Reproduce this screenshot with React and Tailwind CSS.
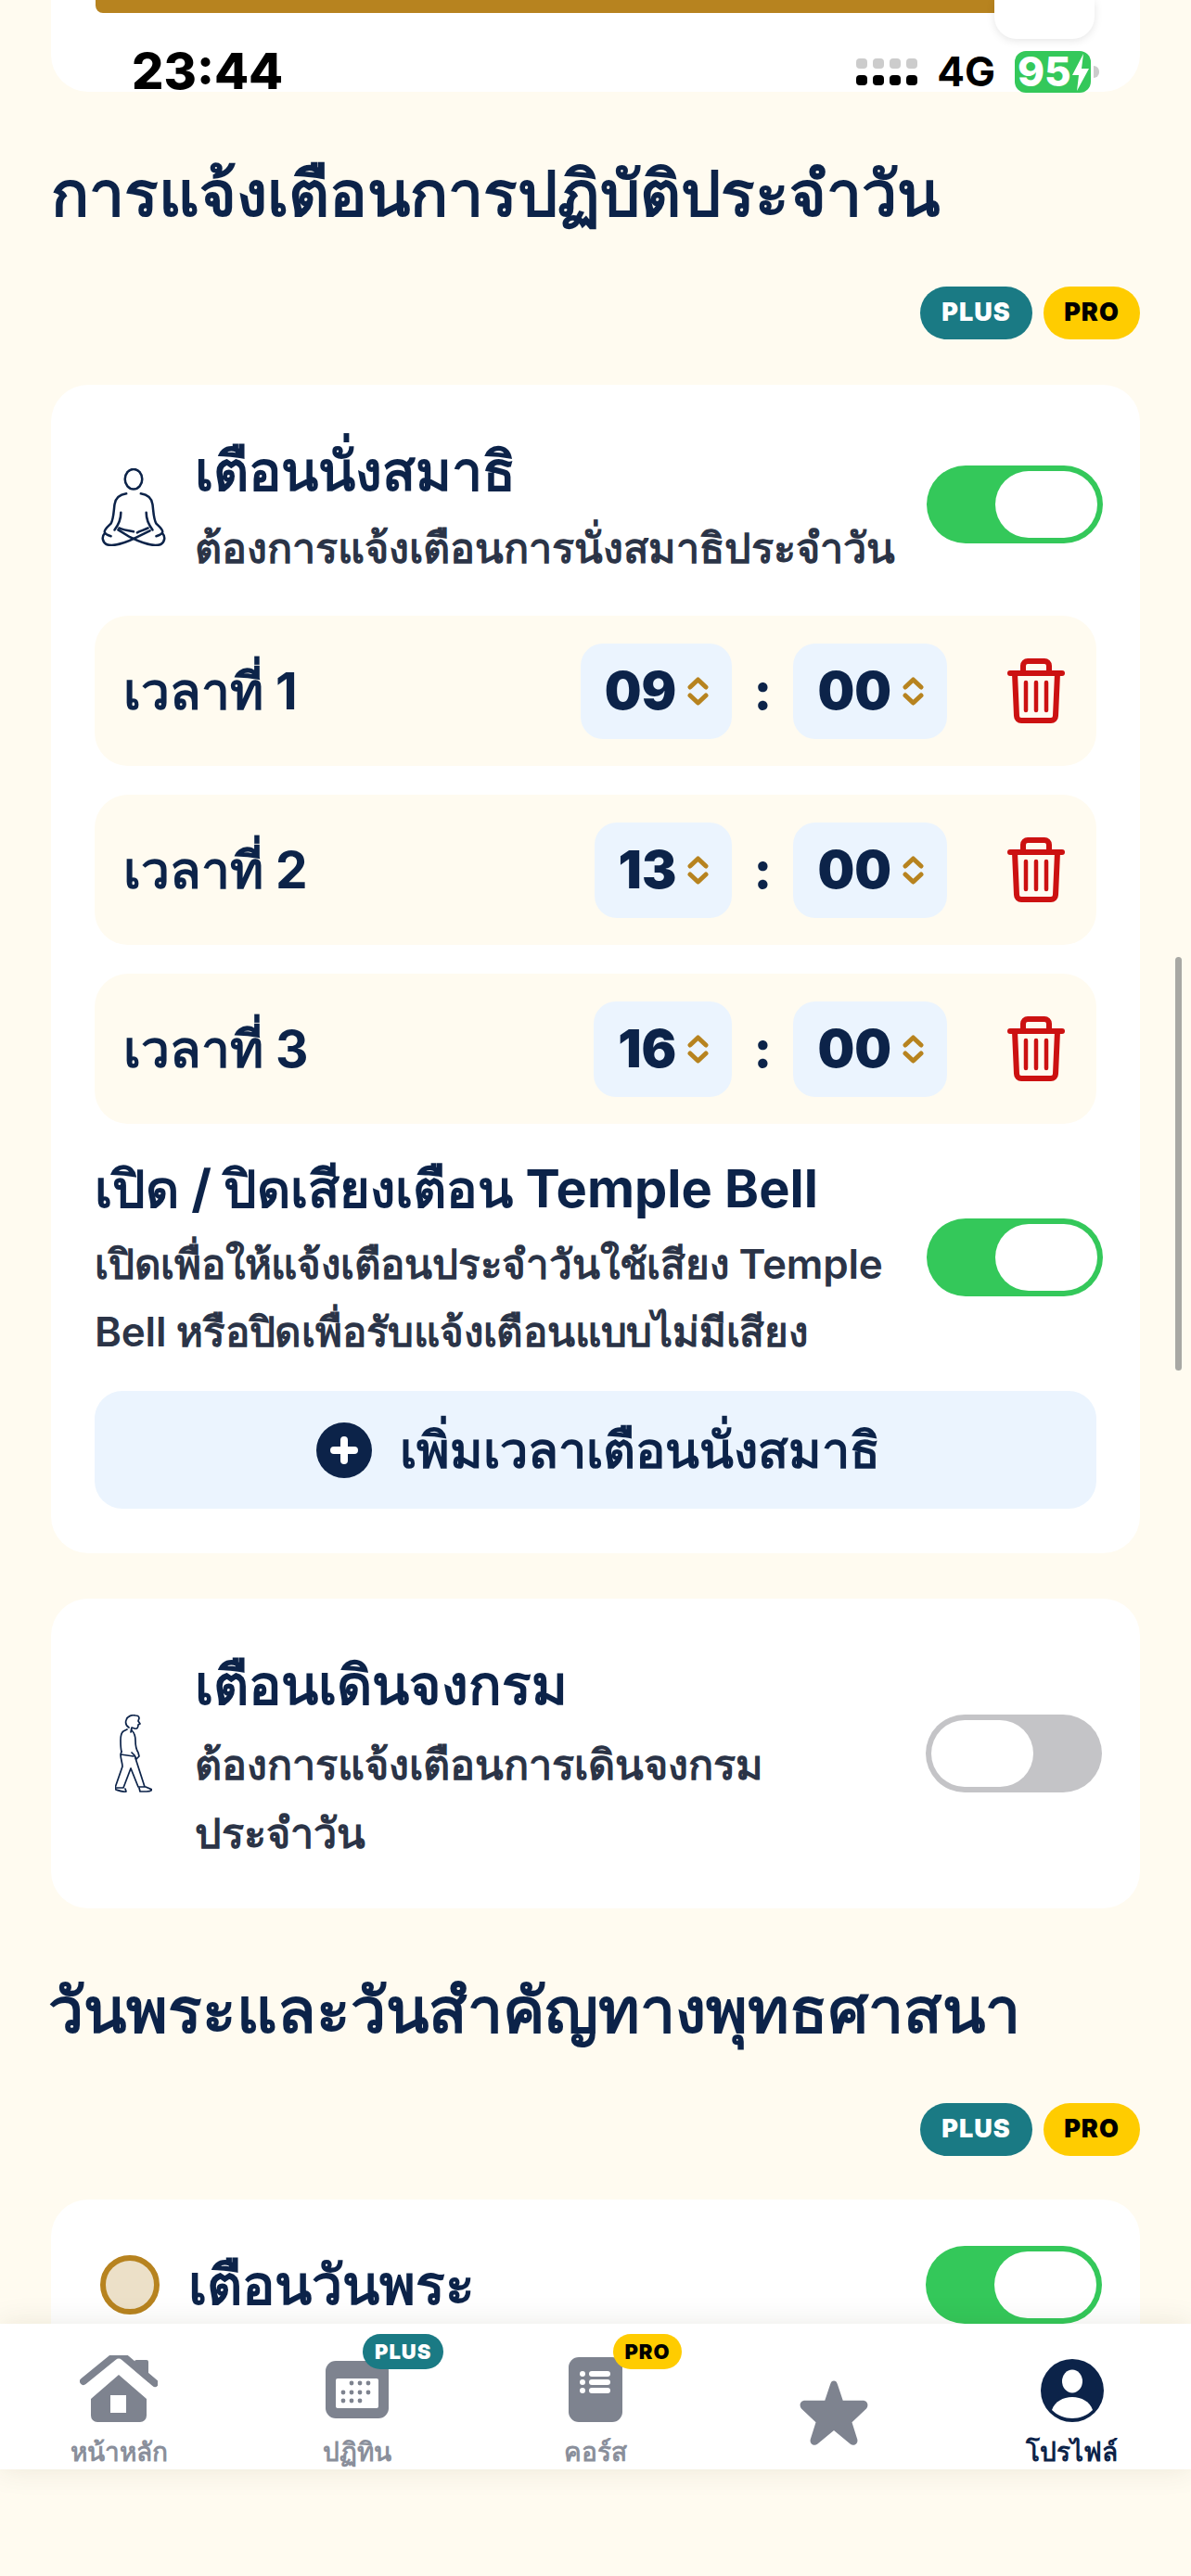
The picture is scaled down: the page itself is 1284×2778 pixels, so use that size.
const Toggle = ({ on = true, className = '' }) => (
  <div className={`flex h-[84px] w-[190px] shrink-0 items-center rounded-[42px] p-[6px] ${on ? 'justify-end bg-[#34c85a]' : 'justify-start bg-[#c4c4c7]'} ${className}`}>
    <div className="h-[72px] w-[110px] rounded-[36px] bg-white" />
  </div>
);

const Badge = ({ pro, small }) => (
  <span className={`flex items-center justify-center rounded-full font-black tracking-[1px] ${small ? 'h-[38px] text-[22px]' : 'h-[57px] text-[27px]'} ${pro ? `bg-[#ffcc00] text-black ${small ? 'w-[74px]' : 'w-[104px]'}` : `bg-[#1a7a84] text-white ${small ? 'w-[87px]' : 'w-[121px]'}`}`}>
    {pro ? 'PRO' : 'PLUS'}
  </span>
);

const PlanBadges = () => (
  <div className="flex justify-end gap-3">
    <Badge />
    <Badge pro />
  </div>
);

const Stepper = () => (
  <svg width="23" height="31" viewBox="0 0 23 31" fill="none" stroke="#b7831f" strokeWidth="5" strokeLinecap="round" strokeLinejoin="round">
    <path d="M3 11l8.5-8 8.5 8" />
    <path d="M3 20l8.5 8 8.5-8" />
  </svg>
);

const TimeBox = ({ value }) => (
  <div className="flex h-[103px] items-center gap-[12px] rounded-[24px] bg-[#ebf4fe] pl-[26px] pr-[25px]">
    <span className="text-[56px] font-black leading-none text-[#0c2349]">{value}</span>
    <Stepper />
  </div>
);

const Trash = () => (
  <svg width="62" height="70" viewBox="0 0 62 70" fill="none" stroke="#cc1111" strokeWidth="6" strokeLinecap="round" strokeLinejoin="round">
    <path d="M3 16h56" />
    <path d="M17 15V8a5 5 0 0 1 5-5h18a5 5 0 0 1 5 5v7" />
    <path d="M8 16l2 46a5 5 0 0 0 5 5h32a5 5 0 0 0 5-5l2-46" />
    <path d="M20 26v30M31 26v30M42 26v30" strokeWidth="4.5" />
  </svg>
);

const TimeRow = ({ label, hour }) => (
  <div className="flex h-[162px] items-center rounded-[36px] bg-[#fffbf0] pl-[31px] pr-[34px]">
    <span className="flex-1 text-[55px] font-bold text-[#0c2349]">{label}</span>
    <TimeBox value={hour} />
    <span className="w-[66px] text-center text-[56px] font-extrabold leading-none text-[#0c2349]">:</span>
    <TimeBox value="00" />
    <span className="ml-[65px]"><Trash /></span>
  </div>
);

const SitIcon = () => (
  <svg width="72" height="84" viewBox="0 0 72 86" fill="none" stroke="#0c2349" strokeWidth="2.6" strokeLinecap="round" strokeLinejoin="round">
    <ellipse cx="36" cy="12" rx="9.5" ry="11" />
    <path d="M28 28c-7 1-12 5-13 12-1 8-1 16-4 21-3 3-7 6-7 9 0 2 3 4 7 5" />
    <path d="M44 28c7 1 12 5 13 12 1 8 1 16 4 21 3 3 7 6 7 9 0 2-3 4-7 5" />
    <path d="M22 49c0 8-3 14-7 19M50 49c0 8 3 14 7 19" />
    <path d="M4 72c-3 3-3 9 2 12 8 3 20-1 34-8l14-7" />
    <path d="M68 72c3 3 3 9-2 12-8 3-20-1-34-8l-13-8" />
    <path d="M20 66c4 2 10 3 16 4M52 66c-4 2-8 3-12 5" />
  </svg>
);

const WalkIcon = () => (
  <svg width="40" height="84" viewBox="0 0 40 84" fill="none" stroke="#0c2349" strokeWidth="1.7" strokeLinecap="round" strokeLinejoin="round">
    <path d="M15 14c-3-2-4-5-3-8 1-4 6-6 10-5 2 0 4 1 4 3l-1 3 2 3-2 1c0 3-1 5-4 4l-3-1-1 5" />
    <path d="M13 16l-4 2c-3 2-3 6-3 10 0 4 0 8 1 12" />
    <path d="M18 17c3 3 4 7 4 11 0 6 1 10 3 13l1 4-3 3-2-4-3-3" />
    <path d="M7 40l-1 3 14 2M6 43c0 5 2 9 2 13L0 79" />
    <path d="M22 47l10 31h-7L17 58l-8 21H0" />
    <path d="M0 79l1 2c3 1 8 3 11 2l-1-3M26 79l1 4h7c2 0 5-1 6-2l-7-3" />
  </svg>
);

const navItems = [
  { label: 'หน้าหลัก', key: 'home' },
  { label: 'ปฏิทิน', key: 'calendar' },
  { label: 'คอร์ส', key: 'course' },
  { label: '', key: 'star' },
  { label: 'โปรไฟล์', key: 'profile' },
];

const NavIcon = ({ name }) => {
  if (name === 'home') return (
    <svg width="84" height="72" viewBox="0 0 84 72" fill="#7e838f">
      <path d="M59 7a2 2 0 0 1 2-2h11a2 2 0 0 1 2 2v22L59 16z" />
      <path d="M4 28L36 2a9 9 0 0 1 12 0l33 28" fill="none" stroke="#7e838f" strokeWidth="8" strokeLinecap="round" />
      <path fillRule="evenodd" d="M42 21l30 26v18a7 7 0 0 1-7 7H19a7 7 0 0 1-7-7V47zM33 43v19h17V43z" />
    </svg>
  );
  if (name === 'calendar') return (
    <svg width="68" height="62" viewBox="0 0 68 62" className="mb-[4px]">
      <rect width="68" height="62" rx="11" fill="#7e838f" />
      <rect x="11" y="19" width="46" height="32" rx="2" fill="#fff" />
      {[26, 35, 44, 53].flatMap((x, i) => [24, 34, 43].filter((y) => !(y === 24 && i === 0) && !(y === 43 && i === 3)).map((y) => (
        <circle key={`${x}-${y}`} cx={x - 7} cy={y} r="2.4" fill="#7e838f" />
      )))}
    </svg>
  );
  if (name === 'course') return (
    <svg width="58" height="70" viewBox="0 0 58 70">
      <rect width="58" height="70" rx="11" fill="#7e838f" />
      <g fill="#fff">
        <circle cx="15" cy="18" r="3" /><circle cx="15" cy="27" r="3" /><circle cx="15" cy="36" r="3" />
        <rect x="22" y="15" width="23" height="6" rx="3" /><rect x="22" y="24" width="23" height="6" rx="3" /><rect x="22" y="33" width="23" height="6" rx="3" />
      </g>
    </svg>
  );
  if (name === 'star') return (
    <svg width="74" height="71" viewBox="0 0 76 72" fill="#7e838f" className="-mb-[25px]">
      <path d="M38 1c2 0 3 1 4 4l6 18 22 0c5 0 7 5 4 9L58 47l6 19c1 5-4 8-8 5L38 56 20 71c-4 3-9 0-8-5l6-19L2 32c-3-4-1-9 4-9l22 0 6-18c1-3 2-4 4-4z" />
    </svg>
  );
  return (
    <svg width="68" height="68" viewBox="0 0 68 68">
      <circle cx="34" cy="34" r="34" fill="#0c2349" />
      <ellipse cx="34" cy="24" rx="11" ry="12.5" fill="#fff" />
      <path d="M12 55c3-9 12-14 22-14s19 5 22 14c-6 6-14 9-22 9s-16-3-22-9z" fill="#fff" />
    </svg>
  );
};

const NavItem = ({ item }) => (
  <div className="flex flex-col items-center">
    <div className="relative flex h-[88px] w-[90px] items-end justify-center">
      <NavIcon name={item.key} />
      {item.key === 'calendar' && <span className="absolute left-[51px] top-[-7px]"><Badge small /></span>}
      {item.key === 'course' && <span className="absolute left-[64px] top-[-7px]"><Badge small pro /></span>}
    </div>
    <span className={`mt-[14px] text-[28px] font-semibold leading-[36px] ${item.key === 'profile' ? 'text-[#0c2349]' : 'text-[#8a8f9b]'}`}>{item.label}</span>
  </div>
);

export default function App() {
  return (
    <div className="relative flex h-[2778px] w-[1284px] flex-col overflow-hidden bg-[#fffbf0] font-['Inter','Noto_Sans','sans-serif']">
      <div className="h-[2506px] overflow-hidden">
        <div className="relative mx-[55px] h-[99px] rounded-b-[40px] bg-white">
          <div className="ml-[48px] mr-[150px] h-[14px] rounded-bl-[8px] bg-[#b7831f]" />
          <div className="absolute right-[49px] top-0 h-[42px] w-[108px] rounded-b-[24px] bg-white shadow-[0_2px_10px_rgba(0,0,0,0.1)]" />
          <div className="absolute left-[87px] right-[53px] top-[52px] flex items-center justify-between">
            <span className="text-[54px] font-extrabold leading-[50px] text-black">23:44</span>
            <div className="flex items-center gap-[21px]">
              <div className="grid grid-cols-4 gap-x-[6px] gap-y-[7px]">
                {[0, 1, 2, 3].map((i) => <span key={i} className="h-[11px] w-[12px] rounded-[4px] bg-[#cccccc]" />)}
                {[4, 5, 6, 7].map((i) => <span key={i} className="h-[11px] w-[12px] rounded-[4px] bg-black" />)}
              </div>
              <span className="text-[44px] font-bold leading-none text-black">4G</span>
              <div className="relative flex h-[45px] w-[82px] items-center rounded-[12px] bg-[#34c85a] pl-[3px] text-[44px] font-extrabold leading-none text-white">
                95
                <svg width="20" height="40" viewBox="0 0 20 40" className="absolute right-[1px] top-[3px]" fill="#fff">
                  <path d="M13 0L1 23h7l-2 17L19 16h-8z" />
                </svg>
                <span className="absolute -right-[9px] top-[16px] h-[13px] w-[6px] rounded-r-full bg-[#cccccc]" />
              </div>
            </div>
          </div>
        </div>

        <h1 className="ml-[55px] mt-[63px] text-[68px] font-bold leading-[92px] text-[#0c2349]">การแจ้งเตือนการปฏิบัติประจำวัน</h1>
        <div className="mr-[55px] mt-[55px]"><PlanBadges /></div>

        <section className="mx-[55px] mt-[49px] rounded-[40px] bg-white px-[47px] pb-[48px] pt-[51px]">
          <div className="flex items-center">
            <div className="flex w-[110px] shrink-0 justify-start pl-[6px]"><SitIcon /></div>
            <div className="-ml-[2px] flex-1">
              <h2 className="text-[59px] font-bold leading-[84px] text-[#0c2349]">เตือนนั่งสมาธิ</h2>
              <p className="mt-[4px] text-[45px] font-semibold leading-[74px] text-[#2b3447]">ต้องการแจ้งเตือนการนั่งสมาธิประจำวัน</p>
            </div>
            <Toggle className="-mr-[7px] -mt-[7px]" />
          </div>
          <div className="mt-[36px] flex flex-col gap-[31px]">
            <TimeRow label="เวลาที่ 1" hour="09" />
            <TimeRow label="เวลาที่ 2" hour="13" />
            <TimeRow label="เวลาที่ 3" hour="16" />
          </div>
          <div className="mt-[33px] flex items-center">
            <div className="flex-1">
              <h3 className="text-[56px] font-bold leading-[74px] text-[#0c2349]">เปิด / ปิดเสียงเตือน Temple Bell</h3>
              <p className="mt-[8px] w-[860px] text-[44px] font-semibold leading-[73px] tracking-[-0.2px] text-[#2b3447]">เปิดเพื่อให้แจ้งเตือนประจำวันใช้เสียง Temple Bell หรือปิดเพื่อรับแจ้งเตือนแบบไม่มีเสียง</p>
            </div>
            <Toggle className="-mr-[7px] -mt-[7px]" />
          </div>
          <button className="mt-[27px] flex h-[127px] w-full items-center justify-center gap-[30px] rounded-[30px] bg-[#ebf4fe] pl-[6px] text-[54px] font-bold text-[#0c2349]">
            <svg width="60" height="60" viewBox="0 0 60 60">
              <circle cx="30" cy="30" r="30" fill="#0c2349" />
              <path d="M30 19v22M19 30h22" stroke="#fff" strokeWidth="8" strokeLinecap="round" />
            </svg>
            เพิ่มเวลาเตือนนั่งสมาธิ
          </button>
        </section>

        <section className="mx-[55px] mt-[49px] flex items-center rounded-[40px] bg-white pb-[44px] pl-[47px] pr-[41px] pt-[51px]">
          <div className="-mt-[7px] flex w-[110px] shrink-0 pl-[22px]"><WalkIcon /></div>
          <div className="-ml-[2px] flex-1">
            <h2 className="text-[59px] font-bold leading-[84px] text-[#0c2349]">เตือนเดินจงกรม</h2>
            <p className="mt-[7px] w-[700px] text-[45px] font-semibold leading-[74px] text-[#2b3447]">ต้องการแจ้งเตือนการเดินจงกรมประจำวัน</p>
          </div>
          <Toggle on={false} className="-mt-[7px]" />
        </section>

        <h1 className="ml-[52px] mt-[63px] text-[68px] font-bold leading-[92px] text-[#0c2349]">วันพระและวันสำคัญทางพุทธศาสนา</h1>
        <div className="mr-[55px] mt-[55px]"><PlanBadges /></div>

        <section className="mx-[55px] mt-[47px] flex h-[300px] items-start rounded-t-[40px] bg-white pl-[53px] pr-[41px] pt-[50px]">
          <span className="mt-[10px] h-[64px] w-[64px] shrink-0 rounded-full border-[6px] border-[#b7831f] bg-[#ece0c8]" />
          <h2 className="ml-[31px] flex-1 text-[59px] font-bold leading-[84px] text-[#0c2349]">เตือนวันพระ</h2>
          <Toggle />
        </section>
      </div>

      <nav className="relative grid h-[157px] grid-cols-5 bg-white pt-[18px] shadow-[0_0_30px_rgba(60,50,20,0.1)]">
        {navItems.map((item) => <NavItem key={item.key} item={item} />)}
      </nav>

      <div className="absolute left-[1267px] top-[1032px] h-[446px] w-[7px] rounded-full bg-[#a8a8a4]" />
    </div>
  );
}
